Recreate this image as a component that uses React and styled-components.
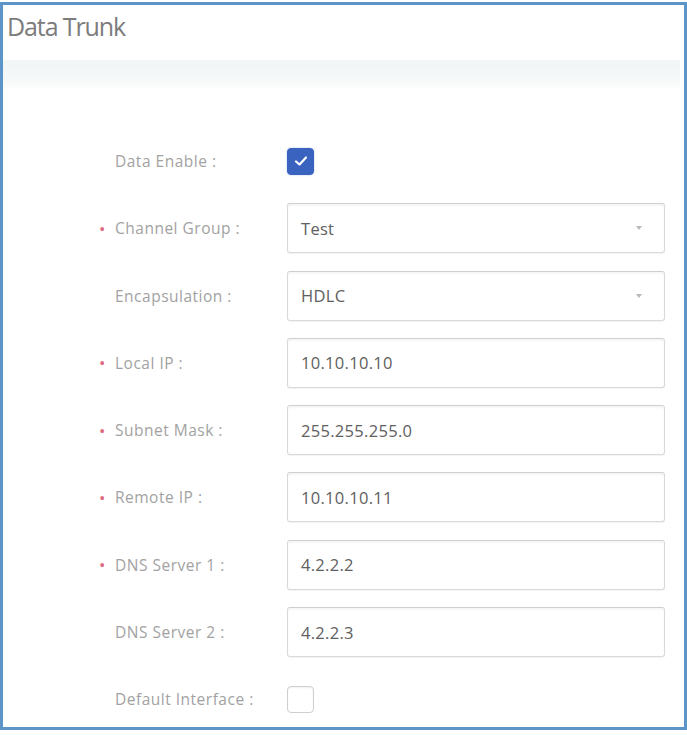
import React from 'react'
import styled, { createGlobalStyle } from 'styled-components'

const GlobalStyle = createGlobalStyle`
  html, body {
    margin: 0;
    padding: 0;
    background: #ffffff;
  }
  body {
    font-family: "Open Sans", "Liberation Sans", sans-serif;
  }
`

const Frame = styled.div`
  box-sizing: border-box;
  width: 687px;
  height: 728px;
  margin-top: 2px;
  border: 3px solid #5d95c9;
  background: #ffffff;
  display: flex;
  flex-direction: column;
`

const Header = styled.div`
  height: 55px;
  padding-left: 4px;
  display: flex;
  align-items: flex-start;
`

const Title = styled.h1`
  margin: 4px 0 0;
  font-family: "Open Sans", "Liberation Sans", sans-serif;
  font-weight: 400;
  font-size: 25px;
  letter-spacing: -1.1px;
  color: #7c7c7c;
`

const Band = styled.div`
  height: 28px;
  margin-right: 4px;
  background: linear-gradient(to bottom, #f2f5f6 0%, #f5f8f8 60%, #fbfcfc 100%);
`

const Form = styled.div`
  display: grid;
  grid-template-columns: 284px 378px;
  grid-auto-rows: 50px;
  row-gap: 17.3px;
  padding-top: 48px;
`

const Label = styled.div`
  display: flex;
  align-items: center;
  padding-left: 96px;
  font-size: 15.5px;
  color: #a2a2a2;
  letter-spacing: 0.5px;
`

const Star = styled.span`
  width: 16px;
  color: ${p => (p.$show ? '#e0667c' : 'transparent')};
  font-size: 17px;
`

const Cell = styled.div`
  display: flex;
  align-items: center;
`

const Field = styled.div`
  box-sizing: border-box;
  width: 378px;
  height: 50px;
  border: 1px solid #d9d9d9;
  border-top-color: #cfcfcf;
  border-radius: 3px;
  box-shadow: inset 0 2px 2px rgba(0, 0, 0, 0.04), 0 1px 1px rgba(0, 0, 0, 0.05);
  display: flex;
  align-items: center;
  justify-content: space-between;
  padding: 0 22px 0 13px;
  font-size: 16.5px;
  color: #606060;
  letter-spacing: 0.3px;
`

const Caret = styled.span`
  width: 0;
  height: 0;
  border-left: 3px solid transparent;
  border-right: 3px solid transparent;
  border-top: 4px solid #b9b9b9;
`

const Box = styled.div`
  box-sizing: border-box;
  width: 27px;
  height: 27px;
  border-radius: 4px;
  background: ${p => (p.$checked ? '#3a63c0' : '#ffffff')};
  border: 1px solid ${p => (p.$checked ? '#3a63c0' : '#cfcfcf')};
  box-shadow: ${p => (p.$checked ? '0 0 2px rgba(58,99,192,0.4)' : 'inset 0 1px 2px rgba(0,0,0,0.06)')};
  display: flex;
  align-items: center;
  justify-content: center;
`

const rows = [
  { label: 'Data Enable :', type: 'check', checked: true },
  { label: 'Channel Group :', req: true, type: 'select', value: 'Test' },
  { label: 'Encapsulation :', type: 'select', value: 'HDLC' },
  { label: 'Local IP :', req: true, type: 'text', value: '10.10.10.10' },
  { label: 'Subnet Mask :', req: true, type: 'text', value: '255.255.255.0' },
  { label: 'Remote IP :', req: true, type: 'text', value: '10.10.10.11' },
  { label: 'DNS Server 1 :', req: true, type: 'text', value: '4.2.2.2' },
  { label: 'DNS Server 2 :', type: 'text', value: '4.2.2.3' },
  { label: 'Default Interface :', type: 'check', checked: false },
]

function Control({ row }) {
  if (row.type === 'check') {
    return (
      <Box $checked={row.checked}>
        {row.checked && (
          <svg width="14" height="12" viewBox="0 0 14 12">
            <path d="M2 6.5 L5.5 9.5 L12 2.5" fill="none" stroke="#ffffff" strokeWidth="2.2" strokeLinecap="round" strokeLinejoin="round" />
          </svg>
        )}
      </Box>
    )
  }
  return (
    <Field>
      <span>{row.value}</span>
      {row.type === 'select' && <Caret />}
    </Field>
  )
}

export default function App() {
  return (
    <>
      <GlobalStyle />
      <Frame>
        <Header>
          <Title>Data Trunk</Title>
        </Header>
        <Band />
        <Form>
          {rows.map((row, i) => (
            <React.Fragment key={i}>
              <Label>
                <Star $show={row.req}>•</Star>
                {row.label}
              </Label>
              <Cell>
                <Control row={row} />
              </Cell>
            </React.Fragment>
          ))}
        </Form>
      </Frame>
    </>
  )
}
